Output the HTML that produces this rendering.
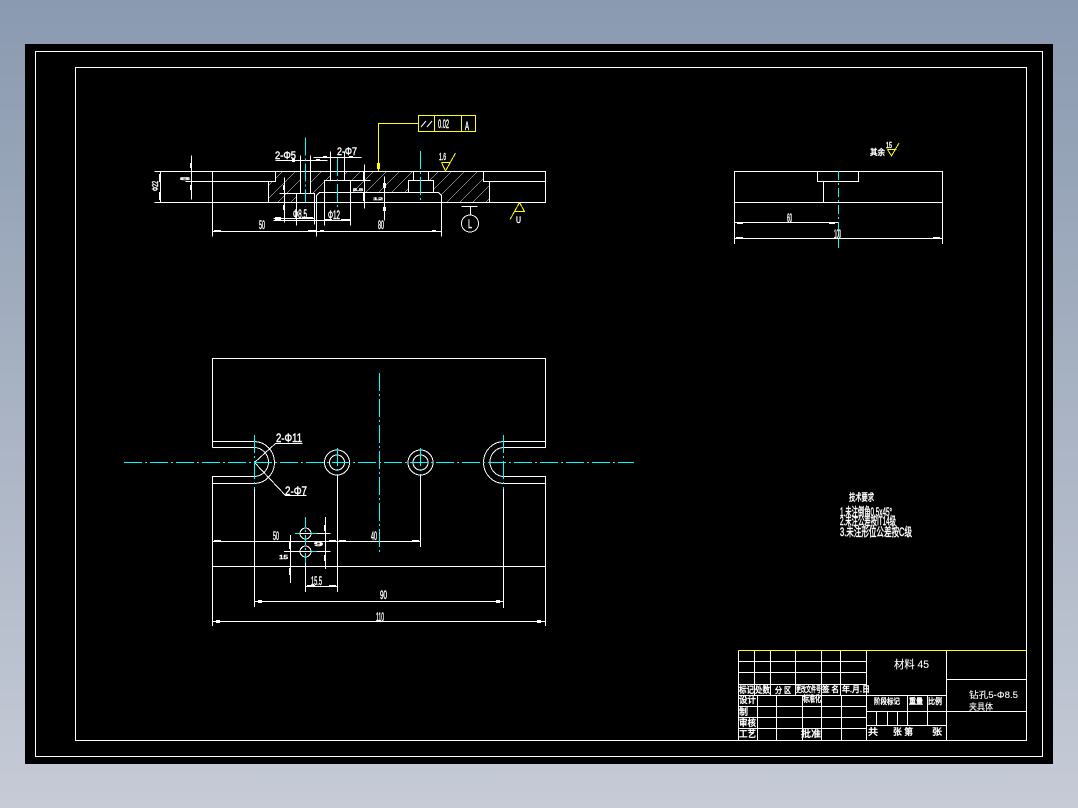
<!DOCTYPE html>
<html><head><meta charset="utf-8"><style>
html,body{margin:0;padding:0;width:1078px;height:808px;overflow:hidden;background:linear-gradient(180deg,#8a9ab0 0%,#c6cbd6 100%)}
#k{position:absolute;left:25px;top:44px;width:1028px;height:720px;background:#000}
svg{position:absolute;left:0;top:0}
.w{fill:none;stroke:#fff;stroke-width:1;shape-rendering:crispEdges}
.y{fill:none;stroke:#ff0;stroke-width:1;shape-rendering:crispEdges}
.c{fill:none;stroke:#0ff;stroke-width:1;stroke-dasharray:18 3 2 3;shape-rendering:crispEdges}
.f{fill:#fff;shape-rendering:crispEdges}
text{font-family:"Liberation Sans","Noto Sans CJK SC",sans-serif;font-size:9px;fill:#fff;stroke:#fff;stroke-width:.45}
</style></head><body>
<div id="k"></div>
<svg width="1078" height="808" viewBox="0 0 1078 808">
<defs><clipPath id="h">
<rect x="275" y="171" width="25" height="10"/><rect x="268" y="181" width="28" height="21"/><rect x="296" y="181" width="4" height="12"/>
<rect x="310" y="171" width="20" height="9"/><rect x="310" y="180" width="4" height="13"/><rect x="314" y="180" width="10" height="12"/>
<rect x="344" y="171" width="69" height="9"/><rect x="350" y="180" width="58" height="12"/>
<rect x="428" y="171" width="55" height="10"/><rect x="433" y="180" width="56" height="12"/><rect x="441" y="192" width="48" height="10"/>
</clipPath></defs>

<!-- frames -->
<path class="w" d="M35.5 51.5H1042.5V756.5H35.5Z"/>
<path class="w" d="M75.5 67.5H1026.5V740.5H75.5Z"/>

<!-- hatch -->
<path class="w" style="stroke-width:.6" clip-path="url(#h)" d="M281 160L231 210M294 160L244 210M307 160L257 210M320 160L270 210M333 160L283 210M346 160L296 210M359 160L309 210M372 160L322 210M385 160L335 210M398 160L348 210M411 160L361 210M424 160L374 210M437 160L387 210M450 160L400 210M463 160L413 210M476 160L426 210M489 160L439 210M502 160L452 210M515 160L465 210M528 160L478 210M541 160L491 210M554 160L504 210"/>

<!-- section view -->
<path class="w" d="M154.5 171.5H545.5V202.5H154.5M160.5 171.5V202.5M212.5 171.5V236.5
M185.5 181.5H275.5V171.5M268.5 181.5V202.5M483.5 171.5V181.5H545.5M489.5 181.5V202.5
M300.5 155.5V193.5M310.5 155.5V193.5M279.5 193.5H314.5V224.5M296.5 193.5V225.5
M330.5 151.5V180.5M344.5 151.5V180.5M324.5 225.5V180.5H370.5M350.5 180.5V225.5
M316.5 236.5V195.5L319.5 192.5H438.5L441.5 195.5V236.5
M413.5 171.5V180.5M428.5 171.5V180.5M408.5 192.5V180.5H433.5V192.5
M284.5 177.5V222.5M364.5 164.5V208.5M384.5 176.5V220.5M191.5 155.5V199.5
M313.5 157.5H361.5M275.5 160.5H327.5M273.5 218.5H314.5M273.5 220.5H350.5
M212.5 231.5H441.5"/>
<path class="f" d="M214 230h7v2h-7zM308 230h8v2h-8zM320 230h4v2h-4zM432 230h4v2h-4zM159 174h2v8h-2zM159 192h2v8h-2zM190 163h2v5h-2zM190 185h2v5h-2zM283 185h2v5h-2zM283 205h2v5h-2zM363 172h2v8h-2zM363 193h2v8h-2zM383 183h3v5h-3zM383 207h3v4h-3zM292 159h3v3h-3zM316 159h4v2h-4zM323 156h4v2h-4zM349 156h4v2h-4zM275 217h6v3h-6zM324 219h8v2h-8zM341 219h9v2h-9zM302 217h11v2h-11z"/>
<path class="c" d="M305.5 137.5V202.5"/>
<path class="c" d="M337.5 158V208"/>
<path class="c" d="M420.5 151V203"/>

<text x="275" y="159" textLength="21" lengthAdjust="spacingAndGlyphs" style="font-size:11px">2-Φ5</text>
<text x="337" y="155" textLength="20" lengthAdjust="spacingAndGlyphs" style="font-size:11px">2-Φ7</text>
<text x="293" y="218" textLength="14" lengthAdjust="spacingAndGlyphs" style="font-size:12px">Φ8.5</text>
<text x="328" y="219" textLength="12" lengthAdjust="spacingAndGlyphs" style="font-size:12px">Φ12</text>
<text x="259" y="229" textLength="6" lengthAdjust="spacingAndGlyphs" style="font-size:12px">50</text>
<text x="378" y="229" textLength="6" lengthAdjust="spacingAndGlyphs" style="font-size:12px">80</text>
<text transform="translate(158 191) rotate(-90)" textLength="10" lengthAdjust="spacingAndGlyphs" style="font-size:8px">Φ22</text>
<text x="180" y="180" textLength="10" lengthAdjust="spacingAndGlyphs" style="font-size:4px">5</text>
<text x="353" y="191" textLength="10" lengthAdjust="spacingAndGlyphs" style="font-size:4px">5.5</text>
<text x="373" y="200" textLength="10" lengthAdjust="spacingAndGlyphs" style="font-size:4px">12</text>

<!-- tolerance box -->
<path class="y" d="M378.5 171V123.5H418.5M418.5 115.5H475.5V131.5H418.5ZM434.5 115.5V131.5M461.5 115.5V131.5"/>
<path d="M377 163h3v6h-3z" fill="#ff0"/>
<path d="M421 127L426 121M427 127L432 121" stroke="#fff" fill="none"/>
<text x="438" y="128" textLength="11" lengthAdjust="spacingAndGlyphs" style="font-size:12px">0.02</text>
<text x="465" y="130" textLength="4" lengthAdjust="spacingAndGlyphs" style="font-size:12px">A</text>

<!-- roughness -->
<path class="y" d="M441.5 162.5H450.5M441.5 162.5L445.5 171L455.5 153"/>
<text x="439" y="160" textLength="7" lengthAdjust="spacingAndGlyphs" style="font-size:10px">1.6</text>

<!-- datum -->
<path class="w" d="M461.5 206.5H477.5M470.5 206.5V215"/>
<circle cx="470" cy="223.5" r="8.5" class="w"/>
<text x="468" y="228" textLength="4" lengthAdjust="spacingAndGlyphs" style="font-size:12px">L</text>
<path class="y" d="M519.5 202.5L514.5 211.5H524.5ZM514.5 211.5L510 219.5"/>
<text x="516" y="223" textLength="5" lengthAdjust="spacingAndGlyphs" style="font-size:9px">U</text>

<!-- plan view -->
<path class="w" d="M212.5 447.5V358.5H545.5V447.5H504M212.5 441.5H254A20.5 21 0 0 1 254 483.5H212.5V626M212.5 447.5H254A14.5 14.5 0 0 1 254 476.5H212.5V483.5M545.5 441.5H504A20.5 21 0 0 0 504 483.5H545.5M504 447.5A14 14.5 0 0 0 504 476.5H545.5V626"/>
<path class="w" d="M254.5 489V607M503.5 489V608M337.5 475V592M420.5 475V547
M212.5 541.5H420.5M212.5 566.5H545.5M254.5 601.5H503.5M212.5 621.5H545.5M305.5 586.5H337.5M305.5 563V592
M290.5 535V583M325.5 517V569M295 533.5H330.5M284 551.5H330.5
M254.5 462.5L275.5 443.5H302.5M254.5 462.5L285.5 495.5H306.5"/>
<path class="f" d="M214 540h7v2h-7zM329 540h7v2h-7zM339 540h7v2h-7zM412 540h7v2h-7zM258 600h4v3h-4zM496 600h4v3h-4zM216 620h4v3h-4zM537 620h4v3h-4zM307 585h8v2h-8zM329 585h7v2h-7zM289 542h2v7h-2zM289 568h2v7h-2zM324 525h2v6h-2zM324 555h2v6h-2z"/>
<circle cx="337" cy="462.5" r="12.5" class="w"/><circle cx="337" cy="462.5" r="7.5" class="w"/>
<circle cx="420.5" cy="462.5" r="12.5" class="w"/><circle cx="420.5" cy="462.5" r="7.5" class="w"/>
<circle cx="305.5" cy="533.5" r="5.5" class="w"/><circle cx="305.5" cy="551.5" r="5.5" class="w"/>
<path class="c" d="M124 462.5H634"/>
<path class="c" d="M379.5 373V552"/>
<path class="c" d="M254.5 435V489"/>
<path class="c" d="M503.5 435V489"/>
<path class="c" d="M337.5 448V475"/>
<path class="c" d="M420.5 448V475"/>
<path class="c" style="stroke-dasharray:10 3 2 3" d="M305.5 517V563"/>
<path d="M295 533.5H300M311 533.5H317M311 551.5H317" stroke="#0ff" fill="none" shape-rendering="crispEdges"/>

<text x="276" y="442" textLength="26" lengthAdjust="spacingAndGlyphs" style="font-size:12px">2-Φ11</text>
<text x="285" y="495" textLength="22" lengthAdjust="spacingAndGlyphs" style="font-size:12px">2-Φ7</text>
<text x="273" y="540" textLength="6" lengthAdjust="spacingAndGlyphs" style="font-size:12px">50</text>
<text x="371" y="540" textLength="6" lengthAdjust="spacingAndGlyphs" style="font-size:12px">40</text>
<text x="311" y="585" textLength="11" lengthAdjust="spacingAndGlyphs" style="font-size:12px">15.5</text>
<text x="380" y="599" textLength="7" lengthAdjust="spacingAndGlyphs" style="font-size:12px">90</text>
<text x="376" y="621" textLength="8" lengthAdjust="spacingAndGlyphs" style="font-size:12px">110</text>
<text x="314" y="546" textLength="9" lengthAdjust="spacingAndGlyphs" style="font-size:5px">9</text>
<text x="279" y="559" textLength="9" lengthAdjust="spacingAndGlyphs" style="font-size:5px">15</text>

<!-- side view -->
<path class="w" d="M734.5 244V171.5H942.5V244M734.5 202.5H942.5M817.5 171.5V181.5H858.5V171.5M823.5 181.5V202.5M734.5 222.5H838M734.5 238.5H942.5"/>
<path class="f" d="M737 222h6v2h-6zM829 222h6v2h-6zM736 237h7v2h-7zM933 237h7v2h-7z"/>
<path class="c" style="stroke-dasharray:9 3 2 3" d="M838.5 171V251"/>
<text x="787" y="222" textLength="5" lengthAdjust="spacingAndGlyphs" style="font-size:12px">60</text>
<text x="834" y="238" textLength="7" lengthAdjust="spacingAndGlyphs" style="font-size:12px">100</text>
<text x="870" y="155" textLength="15" lengthAdjust="spacingAndGlyphs" style="font-size:8px">其余</text>
<text x="886" y="148" textLength="6" lengthAdjust="spacingAndGlyphs" style="font-size:8px">15</text>
<path class="y" d="M887.5 149.5H896.5M887.5 149.5L891.5 156L899 143"/>

<!-- notes -->
<text x="849" y="501" textLength="25" lengthAdjust="spacingAndGlyphs" style="font-size:10px">技术要求</text>
<text x="840" y="516" textLength="52" lengthAdjust="spacingAndGlyphs" style="font-size:12px">1.未注倒角0.5x45°</text>
<text x="840" y="525" textLength="56" lengthAdjust="spacingAndGlyphs" style="font-size:12px">2.未注公差按IT14级</text>
<text x="840" y="536" textLength="72" lengthAdjust="spacingAndGlyphs" style="font-size:12px">3.未注形位公差按C级</text>

<!-- title block -->
<path class="w" d="M738.5 650.5V740.5H1026.5M738.5 661.5H866.5M738.5 672.5H866.5M738.5 684.5H866.5M738.5 695.5H946.5M738.5 706.5H866.5M738.5 717.5H866.5M738.5 728.5H866.5
M754.5 650.5V695.5M770.5 650.5V695.5M795.5 650.5V695.5M821.5 650.5V695.5M840.5 650.5V695.5M866.5 650.5V740.5
M757.5 695.5V740.5M776.5 695.5V740.5M802.5 695.5V740.5M821.5 695.5V740.5M841.5 695.5V740.5
M946.5 650.5V740.5M946.5 679.5H1026.5M946.5 711.5H1026.5M866.5 711.5H946.5M866.5 725.5H946.5
M907.5 695.5V725.5M927.5 695.5V725.5M876.5 711.5V725.5M887.5 711.5V725.5M897.5 711.5V725.5"/>
<path class="y" d="M738.5 650.5H1026.5"/>
<text x="739" y="693" textLength="15" lengthAdjust="spacingAndGlyphs" style="font-size:9px">标记</text>
<text x="755" y="693" textLength="15" lengthAdjust="spacingAndGlyphs" style="font-size:9px">处数</text>
<text x="775" y="693" textLength="16" lengthAdjust="spacingAndGlyphs" style="font-size:8px">分 区</text>
<text x="796" y="692" textLength="25" lengthAdjust="spacingAndGlyphs" style="font-size:8px">更改文件号</text>
<text x="822" y="692" textLength="17" lengthAdjust="spacingAndGlyphs" style="font-size:8px">签 名</text>
<text x="842" y="692" textLength="28" lengthAdjust="spacingAndGlyphs" style="font-size:8px">年.月.日</text>
<text x="739" y="703" textLength="17" lengthAdjust="spacingAndGlyphs" style="font-size:9px">设计</text>
<text x="803" y="702" textLength="18" lengthAdjust="spacingAndGlyphs" style="font-size:9px">标准化</text>
<text x="739" y="715" textLength="9" lengthAdjust="spacingAndGlyphs" style="font-size:9px">制</text>
<text x="739" y="726" textLength="17" lengthAdjust="spacingAndGlyphs" style="font-size:9px">审核</text>
<text x="739" y="737" textLength="17" lengthAdjust="spacingAndGlyphs" style="font-size:9px">工艺</text>
<text x="801" y="737" textLength="20" lengthAdjust="spacingAndGlyphs" style="font-size:9px">批准</text>
<text x="874" y="704" textLength="26" lengthAdjust="spacingAndGlyphs" style="font-size:8px">阶段标记</text>
<text x="909" y="704" textLength="14" lengthAdjust="spacingAndGlyphs" style="font-size:8px">重量</text>
<text x="928" y="704" textLength="14" lengthAdjust="spacingAndGlyphs" style="font-size:8px">比例</text>
<text x="868" y="735" textLength="10" lengthAdjust="spacingAndGlyphs" style="font-size:9px">共</text>
<text x="893" y="735" textLength="20" lengthAdjust="spacingAndGlyphs" style="font-size:9px">张 第</text>
<text x="932" y="735" textLength="10" lengthAdjust="spacingAndGlyphs" style="font-size:9px">张</text>
<text x="894" y="668" textLength="35" lengthAdjust="spacingAndGlyphs" style="font-size:11px;stroke-width:.1">材料  45</text>
<text x="969" y="698" textLength="49" lengthAdjust="spacingAndGlyphs" style="font-size:9px;stroke-width:.1">钻孔5-Φ8.5</text>
<text x="969" y="710" textLength="24" lengthAdjust="spacingAndGlyphs" style="font-size:9px;stroke-width:.1">夹具体</text>
</svg>
</body></html>
